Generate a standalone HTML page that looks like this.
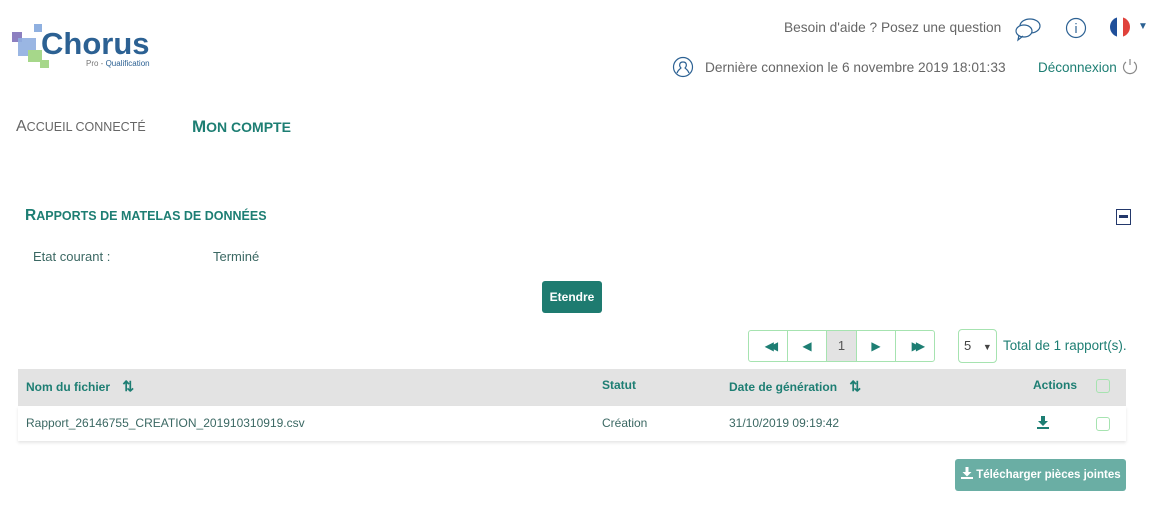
<!DOCTYPE html>
<html><head><meta charset="utf-8"><style>
*{margin:0;padding:0;box-sizing:border-box}
body{width:1163px;height:521px;background:#fff;font-family:"Liberation Sans",sans-serif;position:relative;overflow:hidden;color:#555}
.a{position:absolute;white-space:nowrap}
.t{color:#1d7e73}
.cb{position:absolute;width:14px;height:14px;border:1.5px solid #a6e3b0;border-radius:3px}
</style></head><body>
<!-- logo -->
<svg class="a" style="left:10px;top:22px" width="60" height="50">
<rect x="2" y="10" width="10" height="10" fill="#8c7fc0"/>
<rect x="24" y="2" width="8" height="8" fill="#8fb0e0"/>
<rect x="8" y="16" width="18" height="18" fill="#8faee0" opacity=".9"/>
<rect x="18" y="28" width="14" height="12" fill="#a6d78a"/>
<rect x="30" y="38" width="9" height="8" fill="#a6d78a"/>
</svg>
<div class="a" style="left:41px;top:26px;font-size:31px;font-weight:bold;color:#2c6193">Chorus</div>
<div class="a" style="left:86px;top:59px;font-size:8px;color:#777">Pro - <span style="color:#2c6193">Qualification</span></div>

<div class="a" style="left:784px;top:20px;font-size:13.7px;color:#666">Besoin d'aide ? Posez une question</div>
<svg class="a" style="left:1014px;top:16px" width="28" height="26" fill="none" stroke="#2c6193" stroke-width="1.2">
<ellipse cx="16" cy="10" rx="10" ry="7"/><ellipse cx="10" cy="15" rx="8" ry="6" fill="#fff"/><path d="M5 19 L4 24 L9 20"/></svg>
<svg class="a" style="left:1065px;top:17px" width="22" height="22" fill="none" stroke="#2c6193" stroke-width="1.2"><circle cx="11" cy="11" r="9.5"/><path d="M11 9v7M11 6v1.3"/></svg>
<svg class="a" style="left:1110px;top:17px" width="22" height="22"><clipPath id="c"><circle cx="10" cy="10" r="10"/></clipPath><g clip-path="url(#c)"><rect width="7" height="20" fill="#1f4f9a"/><rect x="7" width="6" height="20" fill="#fff"/><rect x="13" width="7" height="20" fill="#e0413b"/></g></svg>
<div class="a" style="left:1138px;top:21px;font-size:10px;color:#2c6193">▼</div>

<svg class="a" style="left:672px;top:56px" width="22" height="22" fill="none" stroke="#2c6193" stroke-width="1.2"><circle cx="11" cy="11" r="9.5"/><path d="M5 17c1-3 3-4 4-5c-2-2-2-6 2-6s4 4 2 6c1 1 3 2 4 5"/></svg>
<div class="a" style="left:705px;top:60px;font-size:13.7px;color:#666">Dernière connexion le 6 novembre 2019 18:01:33</div>
<div class="a t" style="left:1038px;top:60px;font-size:13.5px">Déconnexion</div>
<svg class="a" style="left:1121px;top:57px" width="18" height="18" fill="none" stroke="#888" stroke-width="1.2"><path d="M5 5a6.5 6.5 0 1 0 8 0M9 2v6"/></svg>

<div class="a" style="left:16px;top:118px;font-size:12.5px;color:#666"><span style="font-size:16px">A</span>CCUEIL CONNECTÉ</div>
<div class="a t" style="left:192px;top:117px;font-size:14px;font-weight:bold"><span style="font-size:17px">M</span>ON COMPTE</div>

<div class="a t" style="left:25px;top:207px;font-size:12.5px;font-weight:bold"><span style="font-size:15.5px">R</span>APPORTS DE MATELAS DE DONNÉES</div>
<div class="a" style="left:1116px;top:209px;width:15px;height:16px;border:1.5px solid #23386b"><div style="margin:5px 2px 0;height:3px;background:#23386b"></div></div>

<div class="a" style="left:33px;top:249px;font-size:13px;color:#3b6863">Etat courant :</div>
<div class="a" style="left:213px;top:249px;font-size:13px;color:#3b6863">Terminé</div>

<div class="a" style="left:542px;top:281px;width:60px;height:32px;background:#1e7b70;border-radius:3px;color:#fff;font-size:12px;font-weight:bold;text-align:center;line-height:32px">Etendre</div>

<div class="a" style="left:748px;top:330px;width:187px;height:32px;border:1px solid #a6e3b0;border-radius:3px;display:flex;font-size:13px;color:#1d7e73">
<div style="width:39px;border-right:1px solid #a6e3b0;text-align:center;line-height:30px;font-size:12px;letter-spacing:-5px">◀◀&nbsp;</div>
<div style="width:39px;border-right:1px solid #a6e3b0;text-align:center;line-height:30px;font-size:12px">◀</div>
<div style="width:30px;border-right:1px solid #a6e3b0;text-align:center;line-height:30px;background:#e3e3e3;color:#555">1</div>
<div style="width:39px;border-right:1px solid #a6e3b0;text-align:center;line-height:30px;font-size:12px">▶</div>
<div style="flex:1;text-align:center;line-height:30px;font-size:12px;letter-spacing:-5px">▶▶&nbsp;</div>
</div>
<div class="a" style="left:958px;top:329px;width:39px;height:34px;border:1px solid #a6e3b0;border-radius:4px;font-size:13px;color:#444;padding:8px 0 0 5px">5 <span style="font-size:9px;margin-left:8px">▼</span></div>
<div class="a t" style="left:1003px;top:338px;font-size:13.4px">Total de 1 rapport(s).</div>

<div class="a" style="left:18px;top:369px;width:1108px;height:37px;background:#e3e3e3"></div>
<div class="a t" style="left:26px;top:378px;font-size:12px;font-weight:bold">Nom du fichier <span style="margin-left:9px;font-size:14px">⇅</span></div>
<div class="a t" style="left:602px;top:378px;font-size:12px;font-weight:bold">Statut</div>
<div class="a t" style="left:729px;top:378px;font-size:12px;font-weight:bold">Date de génération <span style="margin-left:9px;font-size:14px">⇅</span></div>
<div class="a t" style="left:1033px;top:378px;font-size:12px;font-weight:bold">Actions</div>
<div class="cb" style="left:1096px;top:379px"></div>

<div class="a" style="left:18px;top:406px;width:1108px;height:35px;background:#fff;box-shadow:0 2px 3px rgba(0,0,0,.1)"></div>
<div class="a" style="left:26px;top:416px;font-size:12px;color:#3b6863">Rapport_26146755_CREATION_201910310919.csv</div>
<div class="a" style="left:602px;top:416px;font-size:12px;color:#3b6863">Création</div>
<div class="a" style="left:729px;top:416px;font-size:12px;color:#3b6863">31/10/2019 09:19:42</div>
<svg class="a" style="left:1036px;top:415px" width="14" height="14" fill="#1d7e73"><path d="M5 1h4v5h3l-5 5-5-5h3z"/><rect x="1" y="12" width="12" height="2"/></svg>
<div class="cb" style="left:1096px;top:417px"></div>

<div class="a" style="left:955px;top:459px;width:171px;height:32px;background:#6aaea4;border-radius:3px;color:#fff;font-size:11.5px;font-weight:bold;line-height:32px;padding-left:6px">
<svg width="12" height="12" fill="#fff" style="vertical-align:-1px"><path d="M4.5 0h3v5h3l-4.5 4.5-4.5-4.5h3z"/><rect x="0" y="10" width="12" height="2"/></svg> Télécharger pièces jointes</div>
</body></html>
